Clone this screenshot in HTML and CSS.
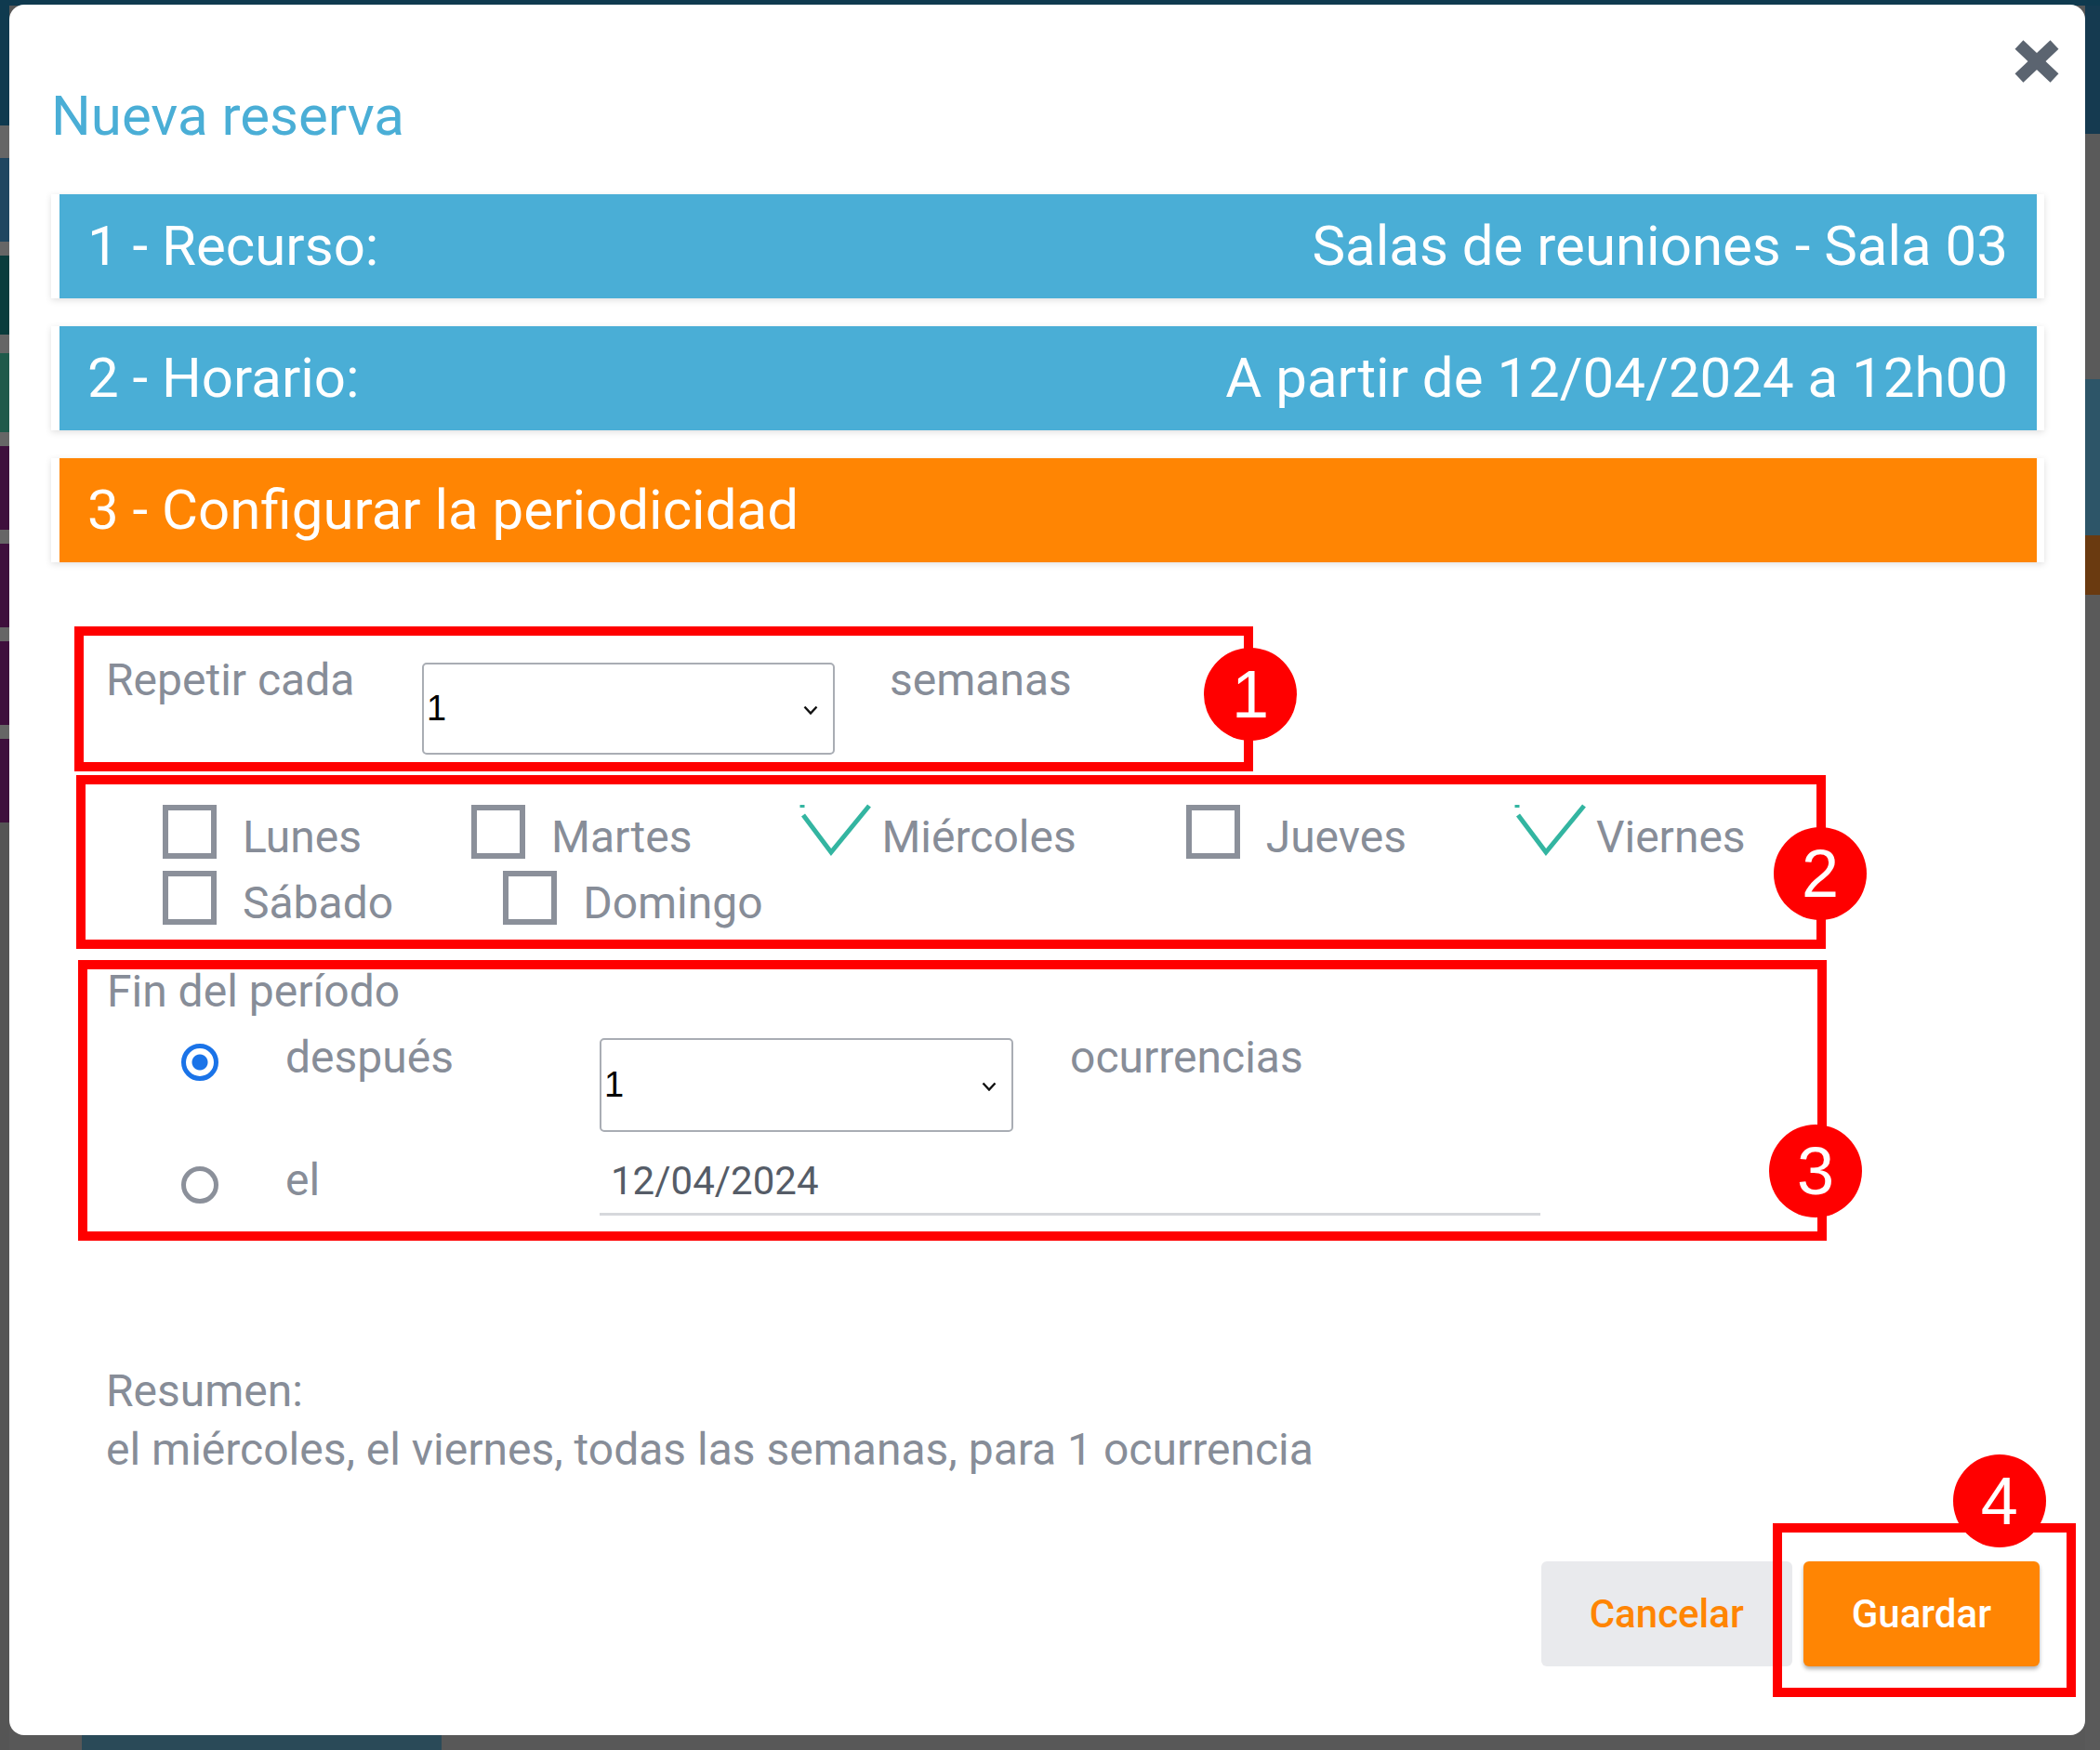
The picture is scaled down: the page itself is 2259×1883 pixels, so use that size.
FILE: index.html
```html
<!DOCTYPE html>
<html lang="es">
<head>
<meta charset="utf-8">
<title>Nueva reserva</title>
<link rel="stylesheet" href="styles.css">
</head>
<body>
<div class="modal">
  <button class="close" aria-label="Cerrar">
    <svg viewBox="0 0 48 46" width="48" height="46"><line x1="5" y1="5" x2="43" y2="41"/><line x1="43" y1="5" x2="5" y2="41"/></svg>
  </button>
  <h1 class="title">Nueva reserva</h1>

  <div class="step-card"><div class="step step-done"><span>1 - Recurso:</span><span>Salas de reuniones - Sala 03</span></div></div>
  <div class="step-card"><div class="step step-done"><span>2 - Horario:</span><span>A partir de 12/04/2024 a 12h00</span></div></div>
  <div class="step-card"><div class="step step-active"><span>3 - Configurar la periodicidad</span></div></div>

  <div class="mark mark-1">
    <div class="repeat-row">
      <span class="lbl lbl-repeat">Repetir cada</span>
      <div class="select select-a"><span class="select-val">1</span><svg class="chev" viewBox="0 0 16 10" width="16" height="10"><polyline points="1.5,1.5 8,8.5 14.5,1.5"/></svg></div>
      <span class="lbl lbl-after">semanas</span>
    </div>
    <span class="badge badge-1">1</span>
  </div>

  <div class="mark mark-2">
    <div class="days">
      <label class="day"><span class="cb"></span><span class="day-name">Lunes</span></label>
      <label class="day"><span class="cb"></span><span class="day-name">Martes</span></label>
      <label class="day"><span class="cb cb-on"><svg viewBox="0 0 58 58" width="58" height="58"><polyline points="2,11 32,51 73,1"/><line x1="1" y1="0" x2="1" y2="3"/></svg></span><span class="day-name">Miércoles</span></label>
      <label class="day"><span class="cb"></span><span class="day-name">Jueves</span></label>
      <label class="day"><span class="cb cb-on"><svg viewBox="0 0 58 58" width="58" height="58"><polyline points="2,11 32,51 73,1"/><line x1="1" y1="0" x2="1" y2="3"/></svg></span><span class="day-name">Viernes</span></label>
      <label class="day"><span class="cb"></span><span class="day-name">Sábado</span></label>
      <label class="day"><span class="cb"></span><span class="day-name">Domingo</span></label>
    </div>
    <span class="badge badge-2">2</span>
  </div>

  <div class="mark mark-3">
    <div class="lbl lbl-end">Fin del período</div>
    <div class="end-row end-row-1">
      <span class="radio radio-on"></span>
      <span class="lbl lbl-opt">después</span>
      <div class="select select-b"><span class="select-val">1</span><svg class="chev" viewBox="0 0 16 10" width="16" height="10"><polyline points="1.5,1.5 8,8.5 14.5,1.5"/></svg></div>
      <span class="lbl lbl-after2">ocurrencias</span>
    </div>
    <div class="end-row end-row-2">
      <span class="radio"></span>
      <span class="lbl lbl-opt">el</span>
      <div class="date">12/04/2024</div>
    </div>
    <span class="badge badge-3">3</span>
  </div>

  <div class="summary">
    <div>Resumen:</div>
    <div>el miércoles, el viernes, todas las semanas, para 1 ocurrencia</div>
  </div>

  <div class="footer">
    <button class="btn btn-cancel">Cancelar</button>
    <div class="save-wrap">
      <button class="btn btn-save">Guardar</button>
      <div class="mark-4"><span class="badge badge-4">4</span></div>
    </div>
  </div>
</div>
</body>
</html>
```

FILE: styles.css
```css
* { box-sizing: border-box; }

html, body { margin: 0; }

body {
  width: 2259px;
  height: 1883px;
  overflow: hidden;
  padding: 5px 16px 16px 10px;
  font-family: Roboto, "Liberation Sans", sans-serif;
  background:
    linear-gradient(#0f3a4f, #0f3a4f) left top / 100% 6px no-repeat,
    linear-gradient(to bottom, #0f3a4f 0 135px, #666 135px 170px, #1f4660 170px 260px, #666 260px 275px, #0a3c3c 275px 360px, #666 360px 380px, #1f5a4a 380px 465px, #666 465px 480px, #3e0f3c 480px 570px, #666 570px 585px, #3e0f3c 585px 675px, #666 675px 690px, #3e0f3c 690px 780px, #666 780px 795px, #3e0f3c 795px 885px, #555 885px) left top / 10px 100% no-repeat,
    linear-gradient(to bottom, #153a50 0 144px, #5a5a5a 144px 408px, #2d5568 408px 576px, #6a3a10 576px 640px, #5a5a5a 640px) right top / 16px 100% no-repeat,
    linear-gradient(#2a4a58, #2a4a58) 88px 100% / 387px 16px no-repeat,
    #585858;
}

.modal {
  position: relative;
  width: 2233px;
  height: 1862px;
  background: #fff;
  border-radius: 16px;
  padding: 90px 44px 0 45px;
}

.close {
  position: absolute;
  top: 38px;
  right: 28px;
  width: 48px;
  height: 46px;
  padding: 0;
  border: 0;
  background: none;
}
.close svg {
  display: block;
  fill: none;
  stroke: #5b6470;
  stroke-width: 13;
  stroke-linecap: butt;
}

.title {
  margin: 0 0 54px 0;
  font-size: 60px;
  line-height: 60px;
  font-weight: 400;
  color: #4aaed6;
}

.step-card {
  background: #fff;
  padding: 0 8px 0 9px;
  box-shadow: 0 2px 7px rgba(0, 0, 0, 0.13);
  margin-bottom: 30px;
}
.step {
  height: 112px;
  display: flex;
  align-items: center;
  justify-content: space-between;
  padding: 0 31px 0 30px;
  color: #fff;
  font-size: 60px;
  line-height: 60px;
}
.step-done { background: #4aaed6; }
.step-active { background: #ff8503; }

.mark {
  position: relative;
  border: 10px solid #ff0000;
}
.mark-1 {
  margin: 69px 0 0 25px;
  width: 1268px;
  height: 156px;
  padding: 20px 0 0 24px;
}
.mark-2 {
  margin: 4px 0 0 27px;
  width: 1882px;
  height: 187px;
  padding: 22px 0 0 83px;
}
.mark-3 {
  margin: 12px 0 0 29px;
  width: 1881px;
  height: 302px;
  padding: 1px 0 0 21px;
}

.badge {
  position: absolute;
  width: 100px;
  height: 100px;
  border-radius: 50%;
  background: #ff0000;
  color: #fff;
  font-family: "Liberation Sans", Arial, sans-serif;
  font-size: 72px;
  line-height: 100px;
  text-align: center;
}
.badge-1 { top: 13px; right: -57px; }
.badge-2 { top: 46px; right: -54px; }
.badge-3 { top: 167px; right: -48px; }

.lbl {
  color: #878d98;
  font-size: 48px;
  line-height: 55px;
}

.repeat-row {
  display: flex;
  align-items: flex-start;
}
.lbl-repeat { width: 340px; flex: none; }
.lbl-after { margin-left: 59px; }

.select {
  position: relative;
  flex: none;
  display: flex;
  align-items: center;
  border: 2px solid #a9adb4;
  border-radius: 5px;
  background: #fff;
  padding-left: 3px;
}
.select-a { width: 444px; height: 99px; margin-top: 9px; }
.select-b { width: 445px; height: 101px; margin-top: 7px; }
.select-val {
  font-family: "Liberation Sans", Arial, sans-serif;
  font-size: 38px;
  color: #000;
}
.chev {
  position: absolute;
  right: 16px;
  top: 50%;
  margin-top: -4px;
  fill: none;
  stroke: #111;
  stroke-width: 2.4;
}

.days {
  display: flex;
  flex-wrap: wrap;
  column-gap: 118px;
  row-gap: 13px;
}
.day {
  display: flex;
  align-items: center;
  height: 58px;
}
.cb {
  width: 58px;
  height: 58px;
  flex: none;
  border: 6px solid #8b909a;
}
.cb-on { border: 0; }
.cb-on svg {
  display: block;
  overflow: visible;
  fill: none;
  stroke: #33b5a1;
  stroke-width: 5;
}
.day-name {
  margin: 11px 0 0 28px;
  color: #878d98;
  font-size: 48px;
  line-height: 48px;
}

.lbl-end { line-height: 46px; }

.end-row {
  display: flex;
  align-items: flex-start;
  padding-left: 80px;
}
.end-row-1 { margin-top: 20px; }
.end-row-2 { margin-top: 24px; }

.radio {
  flex: none;
  width: 40px;
  height: 40px;
  margin-top: 13px;
  margin-right: 72px;
  border-radius: 50%;
  border: 5px solid #8b909a;
  background: #fff;
}
.radio-on {
  border-color: #1a73e8;
  background: radial-gradient(circle, #1a73e8 0 8px, #fff 9px);
}
.lbl-opt { width: 338px; flex: none; }
.lbl-after2 { margin-left: 61px; }

.date {
  width: 1012px;
  margin-top: 1px;
  padding: 0 0 7px 12px;
  border-bottom: 3px solid #d6d8dc;
  color: #555c67;
  font-size: 42px;
  line-height: 55px;
}

.summary {
  margin: 130px 0 0 59px;
  color: #878d98;
  font-size: 48px;
  line-height: 63px;
}

.footer {
  display: flex;
  justify-content: flex-end;
  gap: 12px;
  margin-top: 89px;
  padding-right: 5px;
}
.btn {
  height: 113px;
  padding: 0 52px;
  border: 0;
  border-radius: 6px;
  font-family: Roboto, "Liberation Sans", sans-serif;
  font-size: 42px;
  font-weight: 500;
}
.btn-cancel { background: #e9eaed; color: #ff8503; }
.btn-save {
  background: #ff8503;
  color: #fff;
  box-shadow: 0 3px 4px rgba(0, 0, 0, 0.3);
}
.save-wrap { position: relative; }
.mark-4 {
  position: absolute;
  left: -33px;
  top: -41px;
  width: 326px;
  height: 187px;
  border: 10px solid #ff0000;
}
.badge-4 { top: -84px; left: 184px; }
```
